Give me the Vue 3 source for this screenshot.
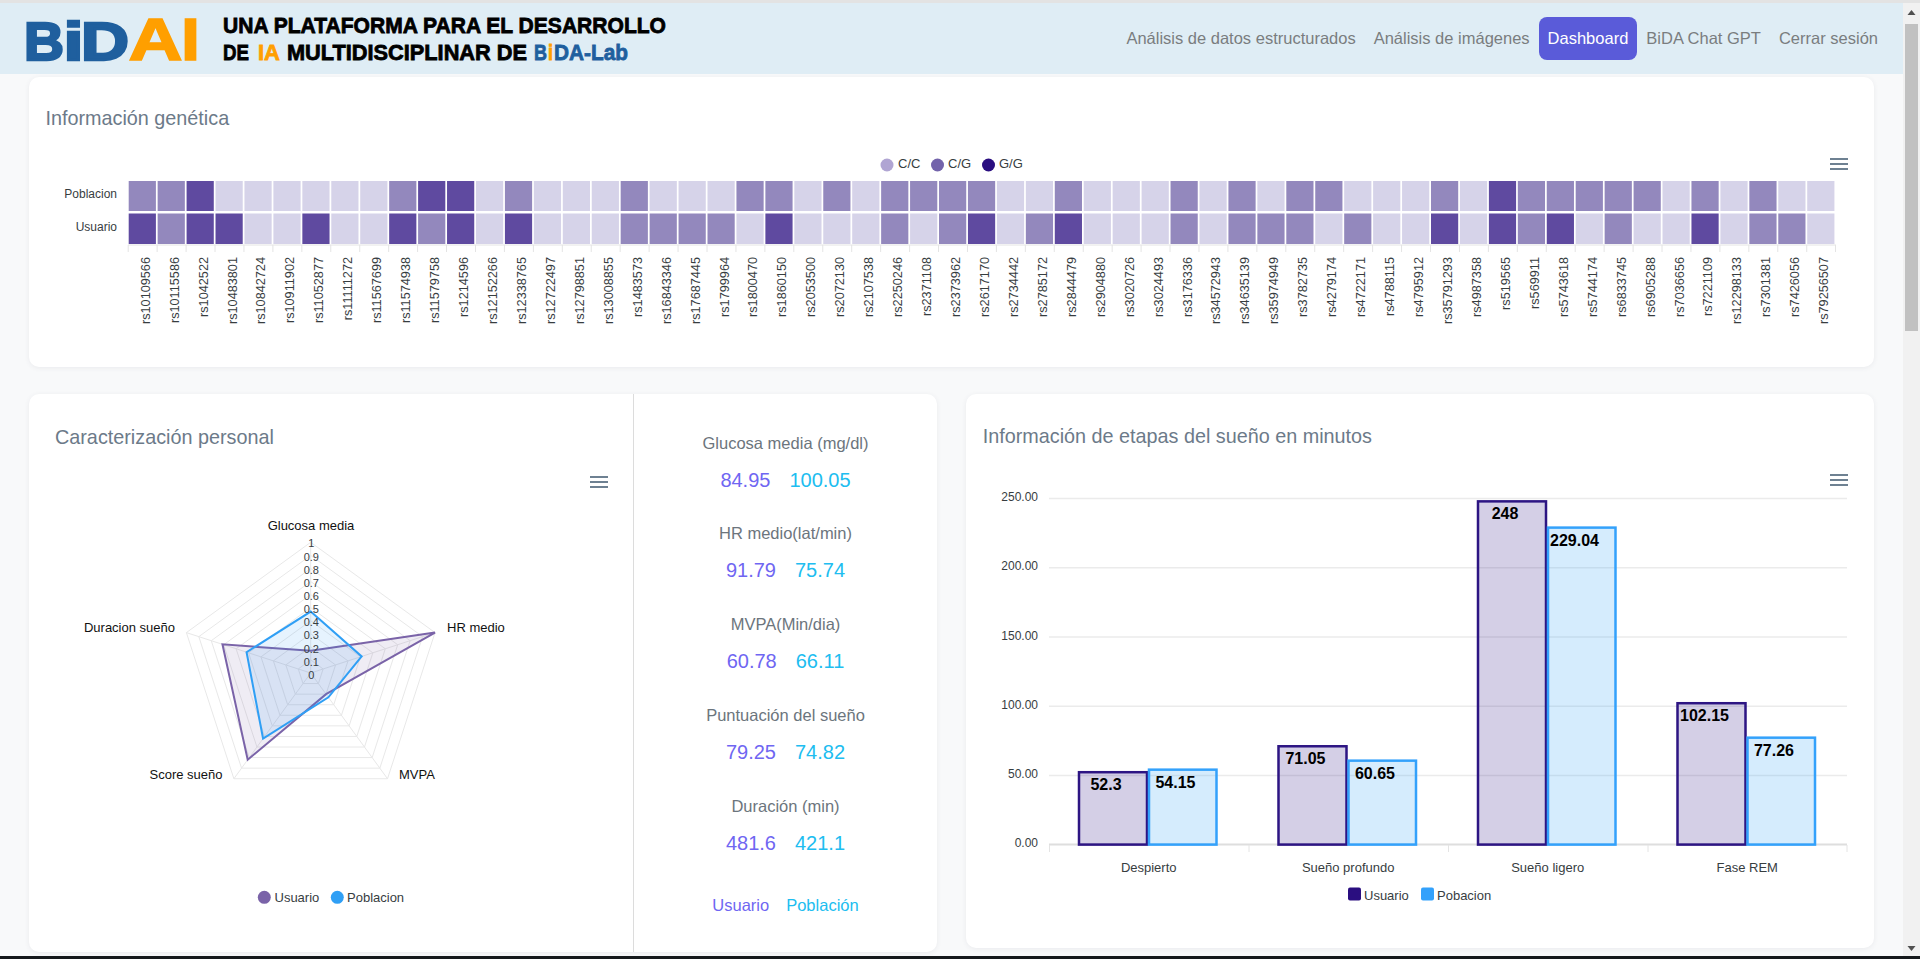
<template>
  <div class="window">
    <div class="topline"></div>
    <div class="viewport">
      <div class="page">
        <header class="navbar">
          <svg class="logo" width="720" height="71" viewBox="0 3 720 71">
            <g class="logo-big blue">
              <text x="24" y="59.5" textLength="40" lengthAdjust="spacingAndGlyphs">B</text>
              <text x="63.5" y="59.5" textLength="20" lengthAdjust="spacingAndGlyphs">i</text>
              <text x="81" y="59.5" textLength="48" lengthAdjust="spacingAndGlyphs">D</text>
            </g>
            <g class="logo-big orange">
              <text class="ai" x="128.5" y="60" textLength="54" lengthAdjust="spacingAndGlyphs">A</text>
              <text class="ai" x="181" y="60" textLength="19" lengthAdjust="spacingAndGlyphs">I</text>
            </g>
            <g class="logo-line">
              <text x="223" y="33" textLength="443" lengthAdjust="spacingAndGlyphs">UNA PLATAFORMA PARA EL DESARROLLO</text>
              <text x="223" y="60" textLength="26" lengthAdjust="spacingAndGlyphs">DE</text>
              <text class="orange" x="258" y="60" textLength="22" lengthAdjust="spacingAndGlyphs">IA</text>
              <text x="287" y="60" textLength="240" lengthAdjust="spacingAndGlyphs">MULTIDISCIPLINAR DE</text>
              <text class="blue" x="534" y="60" textLength="13" lengthAdjust="spacingAndGlyphs">B</text>
              <text class="orange" x="548" y="60" textLength="5" lengthAdjust="spacingAndGlyphs">i</text>
              <text class="blue" x="554" y="60" textLength="74" lengthAdjust="spacingAndGlyphs">DA-Lab</text>
            </g>
          </svg>
          <nav class="links">
            <a v-for="l in links" :key="l" class="link" :class="{ active: l === 'Dashboard' }">{{ l }}</a>
          </nav>
        </header>

        <main class="content">
          <section class="card genes">
            <h5 class="title">Información genética</h5>
            <svg class="chart" width="1845" height="237" viewBox="29 130 1845 237">
              <g class="legend-text">
                <circle cx="887" cy="165" r="6.5" fill="#b0a5d3" />
                <text x="898" y="168">C/C</text>
                <circle cx="937.5" cy="165" r="6.5" fill="#7363ab" />
                <text x="948" y="168">C/G</text>
                <circle cx="988.5" cy="165" r="6.5" fill="#2a0e80" />
                <text x="999" y="168">G/G</text>
              </g>
              <g class="menu">
                <rect x="1830" y="158" width="18" height="2" />
                <rect x="1830" y="163" width="18" height="2" />
                <rect x="1830" y="168" width="18" height="2" />
              </g>
              <text class="axis" x="117" y="198" text-anchor="end">Poblacion</text>
              <text class="axis" x="117" y="231" text-anchor="end">Usuario</text>
              <g v-for="(g, i) in genes" :key="g.id">
                <rect :x="heatX(i)" y="181" width="27.2" height="30" :fill="heatColors[g.pop]" />
                <rect :x="heatX(i)" y="213.5" width="27.2" height="30.5" :fill="heatColors[g.user]" />
                <line :x1="heatX(i) - 0.5" y1="245" :x2="heatX(i) - 0.5" y2="252" stroke="#e4e4e4" />
                <text class="axis gene" :transform="`translate(${heatX(i) + 21} 257) rotate(-90)`" text-anchor="end">{{ g.id }}</text>
              </g>
              <line x1="128" y1="245" x2="1836" y2="245" stroke="#e4e4e4" />
              <line x1="1835.5" y1="245" x2="1835.5" y2="252" stroke="#e4e4e4" />
            </svg>
          </section>

          <div class="row">
            <section class="card personal">
              <div class="radar-side">
                <h5 class="title radar-title">Caracterización personal</h5>
                <svg class="chart" width="604" height="503" viewBox="29 449 604 503">
                  <g class="menu">
                    <rect x="590" y="476" width="18" height="2" />
                    <rect x="590" y="481" width="18" height="2" />
                    <rect x="590" y="486" width="18" height="2" />
                  </g>
                  <polygon v-for="n in 10" :key="n" :points="radarPoints(Array(5).fill(n / 10))" fill="none" stroke="#e8e8e8" />
                  <line v-for="p in spokes" :key="p.x" :x1="radarCx" :y1="radarCy" :x2="p.x" :y2="p.y" stroke="#e8e8e8" />
                  <polygon :points="radarPoints(radarUser)" fill="#7a63a8" fill-opacity="0.12" stroke="#7a63a8" stroke-width="2" />
                  <polygon :points="radarPoints(radarPop)" fill="#2f9ff5" fill-opacity="0.12" stroke="#2f9ff5" stroke-width="2" />
                  <text v-for="n in 11" :key="'t' + n" class="tick" x="311.3" :y="547.4 + (n - 1) * 13.14" text-anchor="middle">{{ radarTicks[n - 1] }}</text>
                  <text class="spoke-label" x="311" y="530" text-anchor="middle">Glucosa media</text>
                  <text class="spoke-label" x="447" y="632">HR medio</text>
                  <text class="spoke-label" x="399" y="779">MVPA</text>
                  <text class="spoke-label" x="222.5" y="779" text-anchor="end">Score sueño</text>
                  <text class="spoke-label" x="175" y="632" text-anchor="end">Duracion sueño</text>
                  <g class="legend-text">
                    <circle cx="264.3" cy="897.3" r="6.5" fill="#7a63a8" />
                    <text x="274.5" y="902">Usuario</text>
                    <circle cx="337.3" cy="897.3" r="6.5" fill="#2f9ff5" />
                    <text x="347" y="902">Poblacion</text>
                  </g>
                </svg>
              </div>
              <div class="stats">
                <div v-for="s in stats" :key="s.label" class="stat">
                  <div class="stat-label">{{ s.label }}</div>
                  <div class="pair values">
                    <span class="user">{{ s.user }}</span>
                    <span class="pop">{{ s.pop }}</span>
                  </div>
                </div>
                <div class="pair stat-legend">
                  <span class="user">Usuario</span>
                  <span class="pop">Población</span>
                </div>
              </div>
            </section>

            <section class="card sleep">
              <h5 class="title sleep-title">Información de etapas del sueño en minutos</h5>
              <svg class="chart" width="908" height="500" viewBox="966 449 908 500">
                <g class="menu">
                  <rect x="1830" y="475" width="18" height="2" />
                  <rect x="1830" y="480" width="18" height="2" />
                  <rect x="1830" y="485" width="18" height="2" />
                </g>
                <g v-for="(t, i) in barTicks" :key="t">
                  <line x1="1049" :y1="barZero - t * barScale" x2="1847" :y2="barZero - t * barScale" :stroke="i ? '#ebebeb' : '#dedede'" :stroke-width="i ? 1.5 : 2" />
                  <text class="axis" x="1038" :y="barZero - t * barScale + 2.5" text-anchor="end">{{ t.toFixed(2) }}</text>
                </g>
                <g v-for="(s, i) in stages" :key="s.name">
                  <line :x1="1049.5 + i * 199.5" y1="846" :x2="1049.5 + i * 199.5" y2="853" stroke="#e4e4e4" />
                  <rect :x="1079 + i * 199.5" :y="barZero - s.user * barScale" width="68" :height="s.user * barScale" fill="#2a0e80" fill-opacity="0.2" stroke="#2d1583" stroke-width="2.5" />
                  <rect :x="1149 + i * 199.5" :y="barZero - s.pop * barScale" width="67.5" :height="s.pop * barScale" fill="#2f9ff5" fill-opacity="0.2" stroke="#33a1fb" stroke-width="2.5" />
                  <text class="bar-value" :x="1106 + i * 199.5" :y="barZero - s.user * barScale + 18" text-anchor="middle">{{ s.user }}</text>
                  <text class="bar-value" :x="1175.5 + i * 199.5" :y="barZero - s.pop * barScale + 18" text-anchor="middle">{{ s.pop }}</text>
                  <text class="axis stage" :x="1148.7 + i * 199.5" y="873" text-anchor="middle">{{ s.name }}</text>
                </g>
                <line x1="1847" y1="846" x2="1847" y2="853" stroke="#e4e4e4" />
                <g class="legend-text">
                  <rect x="1348" y="888.5" width="13" height="13" rx="2" fill="#2a0e80" />
                  <text x="1364" y="900.5">Usuario</text>
                  <rect x="1421" y="888.5" width="13" height="13" rx="2" fill="#33a1fb" />
                  <text x="1437" y="900.5">Pobacion</text>
                </g>
              </svg>
            </section>
          </div>
        </main>
      </div>
      <div class="scrollbar">
        <svg class="arrow" width="17" height="17" viewBox="0 0 17 17"><path d="M4.5 12 L8.5 7 L12.5 12 Z" fill="#505050" /></svg>
        <div class="thumb"></div>
        <svg class="arrow down" width="17" height="17" viewBox="0 0 17 17"><path d="M4.5 7 L8.5 12 L12.5 7 Z" fill="#505050" /></svg>
      </div>
    </div>
    <div class="taskbar"></div>
  </div>
</template>

<script setup>
const links = ['Análisis de datos estructurados', 'Análisis de imágenes', 'Dashboard', 'BiDA Chat GPT', 'Cerrar sesión']

const heatColors = ['#d6d3e9', '#9388bd', '#5f4aa0']
const heatX = (i) => 128.7 + i * 28.94

const geneIds = 'rs10109566 rs10115586 rs1042522 rs10483801 rs10842724 rs10911902 rs11052877 rs11111272 rs11567699 rs11574938 rs11579758 rs1214596 rs12152266 rs12338765 rs12722497 rs12798851 rs13008855 rs1483573 rs16843346 rs17687445 rs1799964 rs1800470 rs1860150 rs2053500 rs2072130 rs2107538 rs2250246 rs2371108 rs2373962 rs2617170 rs2734442 rs2785172 rs2844479 rs2904880 rs3020726 rs3024493 rs3176336 rs34572943 rs34635139 rs35974949 rs3782735 rs4279174 rs4722171 rs4788115 rs4795912 rs35791293 rs4987358 rs519565 rs569911 rs5743618 rs5744174 rs6833745 rs6905288 rs7036656 rs7221109 rs12298133 rs7301381 rs7426056 rs79256507'.split(' ')
const popRow = '1120000001220100010' + '0011010111100100010101' + '100010211111010100'
const userRow = '2122002002120200011' + '1102000101201200010111' + '010020212010020110'
const genes = geneIds.map((id, i) => ({ id, pop: Number(popRow[i]), user: Number(userRow[i]) }))

const radarCx = 310.7
const radarCy = 673
const radarR = 130.7
const radarTicks = ['1', '0.9', '0.8', '0.7', '0.6', '0.5', '0.4', '0.3', '0.2', '0.1', '0']
const radarUser = [0.17, 1, 0.2, 0.82, 0.71]
const radarPop = [0.47, 0.41, 0.23, 0.62, 0.516]
const corner = (i, v) => {
  const a = (i * 2 * Math.PI) / 5
  return { x: radarCx + Math.sin(a) * radarR * v, y: radarCy - Math.cos(a) * radarR * v }
}
const radarPoints = (vals) => vals.map((v, i) => { const p = corner(i, v); return `${p.x},${p.y}` }).join(' ')
const spokes = [0, 1, 2, 3, 4].map((i) => corner(i, 1))

const stats = [
  { label: 'Glucosa media (mg/dl)', user: '84.95', pop: '100.05' },
  { label: 'HR medio(lat/min)', user: '91.79', pop: '75.74' },
  { label: 'MVPA(Min/dia)', user: '60.78', pop: '66.11' },
  { label: 'Puntuación del sueño', user: '79.25', pop: '74.82' },
  { label: 'Duración (min)', user: '481.6', pop: '421.1' },
]

const barZero = 845.6
const barScale = 1.384
const barTicks = [0, 50, 100, 150, 200, 250]
const stages = [
  { name: 'Despierto', user: 52.3, pop: 54.15 },
  { name: 'Sueño profundo', user: 71.05, pop: 60.65 },
  { name: 'Sueño ligero', user: 248, pop: 229.04 },
  { name: 'Fase REM', user: 102.15, pop: 77.26 },
]
</script>

<style scoped>
.window {
  height: 100vh;
  display: flex;
  flex-direction: column;
  overflow: hidden;
  font-family: "Liberation Sans", Arial, sans-serif;
  background: #f8f9fa;
}
.topline {
  height: 3px;
  background: #e3e3e3;
  flex: none;
}
.taskbar {
  height: 3px;
  background: #15191c;
  flex: none;
}
.viewport {
  flex: 1;
  display: flex;
  min-height: 0;
}
.page {
  flex: 1;
  min-width: 0;
}
.navbar {
  height: 71px;
  background: #dfedf5;
  display: flex;
  align-items: center;
  justify-content: space-between;
  padding-right: 16px;
}
.logo {
  display: block;
}
.logo-big text {
  font-size: 53px;
  font-weight: 700;
  stroke-width: 2.4px;
}
.logo-big .ai {
  font-size: 60px;
  stroke-width: 1.6px;
}
.logo-line text {
  font-size: 22.5px;
  font-weight: 700;
  stroke: currentColor;
  stroke-width: 0.8px;
  color: #000;
}
.blue {
  fill: #1f5f9e;
  stroke: #1f5f9e;
}
.orange {
  fill: #ff9f00;
  stroke: #ff9f00;
}
.logo-line .blue {
  color: #1f5f9e;
}
.logo-line .orange {
  color: #ff9f00;
}
.links {
  display: flex;
  align-items: center;
}
.link {
  height: 43px;
  padding: 0 9px;
  display: flex;
  align-items: center;
  font-size: 16.5px;
  color: #7a7d7f;
  border-radius: 8px;
}
.link.active {
  background: #5a5bd9;
  color: #fff;
}
.content {
  padding: 3px 29px 0;
  display: flex;
  flex-direction: column;
  gap: 27px;
}
.card {
  background: #fff;
  border-radius: 10px;
  box-shadow: 0 1px 5px rgba(60, 70, 90, 0.08);
}
.title {
  margin: 0;
  font-size: 19.8px;
  line-height: 24px;
  font-weight: 400;
  color: #6c7a89;
  padding: 29px 0 0 16.5px;
}
.radar-title {
  padding: 31px 0 0 26px;
}
.sleep-title {
  padding: 29.6px 0 0 16.7px;
}
.chart {
  display: block;
}
.row {
  display: grid;
  grid-template-columns: 908px 908px;
  column-gap: 29px;
  align-items: start;
}
.personal {
  display: grid;
  grid-template-columns: 604px 1fr;
}
.stats {
  border-left: 1px solid #dcdcdc;
  padding-top: 36.5px;
  text-align: center;
  font-size: 16.5px;
}
.stat {
  margin-bottom: 26.75px;
}
.stat-label {
  line-height: 24px;
  color: #6c757d;
}
.pair {
  display: flex;
  justify-content: center;
}
.values {
  margin-top: 10px;
  font-size: 20px;
  line-height: 30px;
  gap: 19px;
}
.stat-legend {
  margin-top: 35.5px;
  line-height: 24px;
  gap: 17px;
}
.user {
  color: #6f66f2;
}
.pop {
  color: #20bdf0;
}
.menu rect {
  fill: #6e8192;
}
.axis {
  font-size: 12px;
  fill: #373d3f;
}
.gene {
  font-size: 12.7px;
}
.stage {
  font-size: 13px;
}
.legend-text text {
  font-size: 13px;
  fill: #373d3f;
}
.tick {
  font-size: 11px;
  fill: #373d3f;
}
.spoke-label {
  font-size: 13px;
  fill: #111;
}
.bar-value {
  font-size: 16px;
  font-weight: 700;
  fill: #000;
}
.scrollbar {
  width: 17px;
  flex: none;
  background: #f1f1f1;
  display: flex;
  flex-direction: column;
}
.arrow {
  display: block;
  flex: none;
}
.arrow.down {
  margin-top: auto;
}
.thumb {
  width: 13px;
  height: 307px;
  margin: 4px 2px 0;
  background: #c1c1c1;
}
</style>

<style>
html, body {
  margin: 0;
  overflow: hidden;
}
</style>
